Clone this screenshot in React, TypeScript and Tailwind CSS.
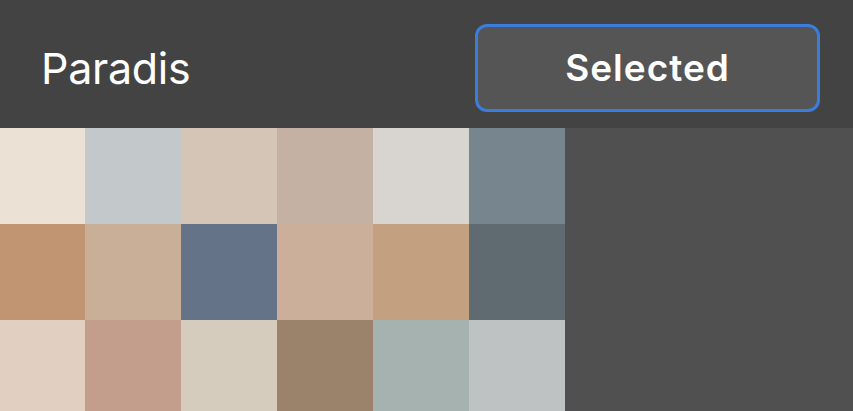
const swatches = [
  "#ebe2d5", "#c3c8ca", "#d4c5b7", "#c4b1a4", "#d8d5d0", "#77858f",
  "#c19571", "#c9af98", "#647388", "#ccaf9b", "#c3a080", "#606a71",
  "#e1cfc1", "#c49e8d", "#d5ccbe", "#9a826b", "#a6b2b0", "#bec2c3",
]

export default function App() {
  return (
    <div className="w-[853px] h-[411px] overflow-hidden bg-[#505050] font-['Inter',sans-serif]">

      {/* Header */}
      <div className="h-[128px] bg-[#434343] flex items-center justify-between pl-[41px] pr-[33px] pt-[7px]">
        <h1 className="text-[43px] text-white font-normal tracking-[-0.3px] pt-[2px]">
          Paradis
        </h1>

        <button className="w-[345px] h-[88px] rounded-[12px] border-[3px] border-[#3b7ddd] bg-[#555555] text-white text-[37px] font-semibold tracking-[1px] flex items-center justify-center">
          Selected
        </button>
      </div>

      {/* Palette */}
      <div className="overflow-hidden w-[565px]">
        <div className="grid grid-cols-[96px_96px_96px_96px_96px_96px] auto-rows-[96px] w-[576px] -ml-[11px]">
          {swatches.map((c, i) => (
            <div key={i} style={{ backgroundColor: c }} />
          ))}
        </div>
      </div>

    </div>
  )
}
